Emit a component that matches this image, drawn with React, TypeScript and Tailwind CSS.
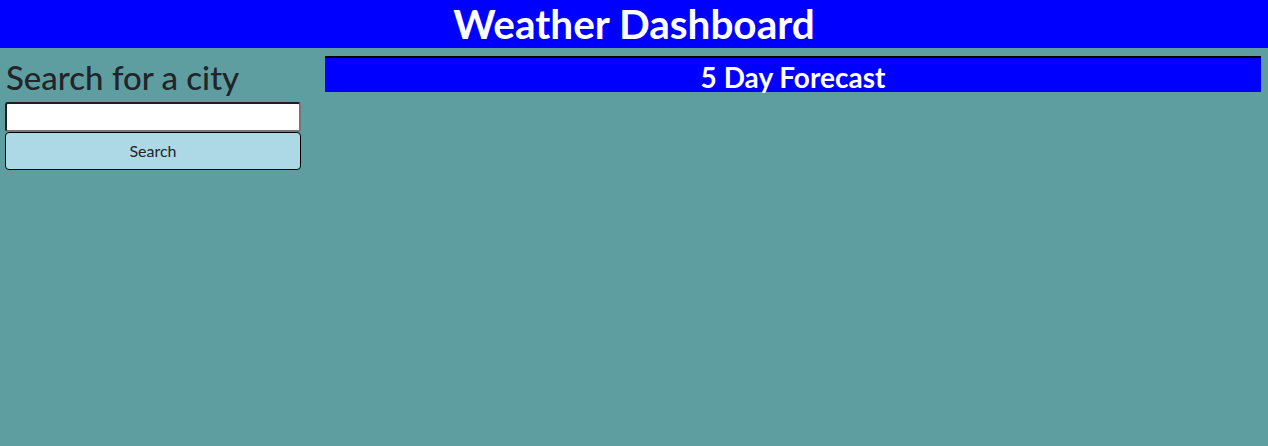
export default function App() {
  return (
    <div className="min-h-[446px] bg-[#5f9ea0] font-['Lato','Open_Sans',sans-serif] text-[#212529]">
      {/* Header */}
      <header className="h-12 bg-[#0000ff] flex items-center justify-center">
        <h1 className="text-[40.5px] font-bold text-white leading-none">Weather Dashboard</h1>
      </header>

      <main className="flex pt-2">
        {/* Search column */}
        <aside className="w-[296px] ml-[5px] shrink-0">
          <h2 className="text-[33px] leading-[38px] font-medium mt-[2px] mb-[6px] pl-[1px]">Search for a city</h2>
          <input
            type="text"
            className="block w-full h-[30px] bg-white border-2 border-t-[#1f1f1f] border-l-[#1f1f1f] border-r-[#767676] border-b-[#767676] rounded-[3px]"
          />
          <button className="block w-full h-[38px] bg-[#add8e6] border border-black rounded-[4px] text-[16px] text-[#212529]">
            Search
          </button>
        </aside>

        {/* Forecast column */}
        <section className="flex-1 ml-[24px] mr-[7px]">
          <h3 className="h-9 pt-[3px] bg-[#0000ff] border-t-2 border-black text-white text-[28px] font-bold flex items-center justify-center leading-none">
            5 Day Forecast
          </h3>
        </section>
      </main>
    </div>
  )
}
